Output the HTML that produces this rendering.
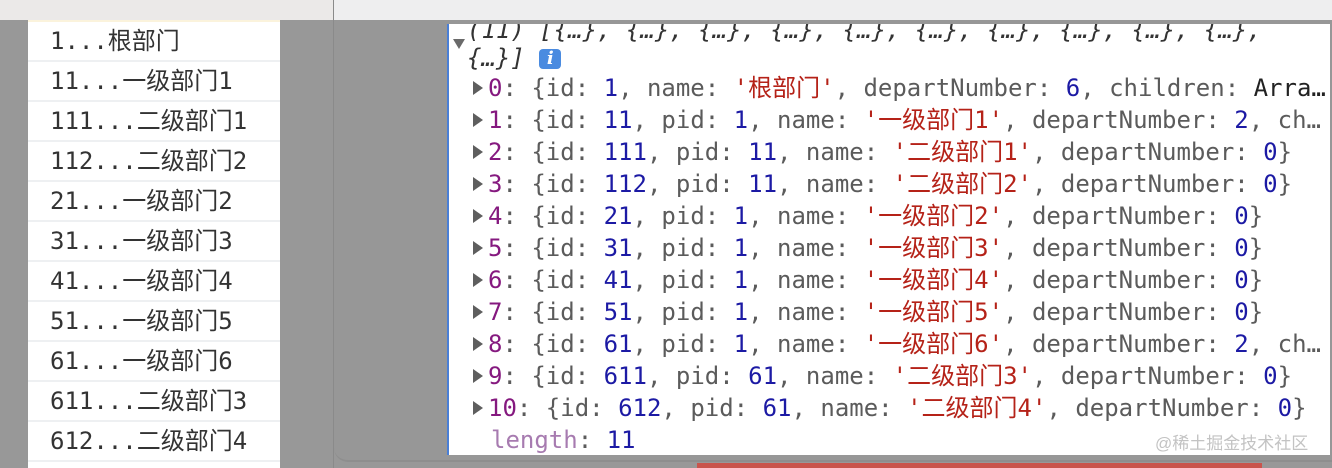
<!DOCTYPE html>
<html><head><meta charset="utf-8"><style>
*{margin:0;padding:0;box-sizing:border-box}
body{width:1332px;height:468px;overflow:hidden;background:#989898;position:relative;font-family:"DejaVu Sans Mono","Noto Sans CJK SC",monospace}
.top1{position:absolute;left:0;top:0;width:333px;height:20px;background:#ebe9e8}
.top2{position:absolute;left:334px;top:0;width:998px;height:20px;background:#eeeeef}
.vl{position:absolute;left:333px;top:0;width:1px;height:468px;background:#8a8a8a}
.inner{position:absolute;left:334px;top:20px;width:998px;height:442px;background:#979797;border-bottom-left-radius:14px;border-bottom:2px solid #8e8e8e}
.list{position:absolute;left:28px;top:20px;width:252px;height:448px;background:#fff;border-top:2px solid #fbf3dc}
.row{height:40px;border-bottom:2px solid #eef0f2;font-size:24px;color:#333;padding-left:22px;line-height:38px;white-space:nowrap}
.con{position:absolute;left:447px;top:24px;width:883px;height:431px;background:#fff;border-left:2px solid #4a7fd6;overflow:hidden;font-size:24px;color:#5b5b5b;white-space:pre}
.l{position:absolute;left:0;height:32px;line-height:32px}
.n{color:#1c1aa4}.s{color:#b52218}.i{color:#85197f}.k{color:#5b5b5b}.b{color:#222}
.tri{display:inline-block;width:0;height:0;border-top:7px solid transparent;border-bottom:7px solid transparent;border-left:10px solid #5e5e5e;margin:0 5px 0 24px;vertical-align:1px}
.info{display:inline-block;width:22px;height:20px;background:#4a8be0;border-radius:4px;color:#fff;font-style:italic;font-weight:bold;font-size:18px;line-height:20px;text-align:center;vertical-align:2px;font-family:"DejaVu Serif",serif}
.wm{position:absolute;left:1155px;top:429px;font-size:17px;color:#c3c3c3;font-family:"Liberation Sans","Noto Sans CJK SC",sans-serif}
.red{position:absolute;left:697px;top:463px;width:565px;height:5px;background:#c9544c}
</style></head><body>
<div class="top1"></div><div class="top2"></div><div class="inner"></div><div class="vl"></div>
<div class="list">
<div class="row">1...根部门</div>
<div class="row">11...一级部门1</div>
<div class="row">111...二级部门1</div>
<div class="row">112...二级部门2</div>
<div class="row">21...一级部门2</div>
<div class="row">31...一级部门3</div>
<div class="row">41...一级部门4</div>
<div class="row">51...一级部门5</div>
<div class="row">61...一级部门6</div>
<div class="row">611...二级部门3</div>
<div class="row">612...二级部门4</div>
</div>
<div class="con">
<div class="l b" style="top:-10px;left:18px;font-style:italic;color:#333">(11) [{…}, {…}, {…}, {…}, {…}, {…}, {…}, {…}, {…}, {…},</div>
<div style="position:absolute;left:4px;top:15px;width:0;height:0;border-left:6px solid transparent;border-right:6px solid transparent;border-top:10px solid #6a6a6a"></div>
<div class="l b" style="top:18px;left:18px;font-style:italic;color:#333">{…}] <span class="info">i</span></div>
<div class="l" style="top:48px"><span class="tri"></span><span class="i">0</span>: {id: <span class="n">1</span>, name: <span class="s">'根部门'</span>, departNumber: <span class="n">6</span>, children: <span class="b">Arra…</span></div>
<div class="l" style="top:80px"><span class="tri"></span><span class="i">1</span>: {id: <span class="n">11</span>, pid: <span class="n">1</span>, name: <span class="s">'一级部门1'</span>, departNumber: <span class="n">2</span>, ch…</div>
<div class="l" style="top:112px"><span class="tri"></span><span class="i">2</span>: {id: <span class="n">111</span>, pid: <span class="n">11</span>, name: <span class="s">'二级部门1'</span>, departNumber: <span class="n">0</span>}</div>
<div class="l" style="top:144px"><span class="tri"></span><span class="i">3</span>: {id: <span class="n">112</span>, pid: <span class="n">11</span>, name: <span class="s">'二级部门2'</span>, departNumber: <span class="n">0</span>}</div>
<div class="l" style="top:176px"><span class="tri"></span><span class="i">4</span>: {id: <span class="n">21</span>, pid: <span class="n">1</span>, name: <span class="s">'一级部门2'</span>, departNumber: <span class="n">0</span>}</div>
<div class="l" style="top:208px"><span class="tri"></span><span class="i">5</span>: {id: <span class="n">31</span>, pid: <span class="n">1</span>, name: <span class="s">'一级部门3'</span>, departNumber: <span class="n">0</span>}</div>
<div class="l" style="top:240px"><span class="tri"></span><span class="i">6</span>: {id: <span class="n">41</span>, pid: <span class="n">1</span>, name: <span class="s">'一级部门4'</span>, departNumber: <span class="n">0</span>}</div>
<div class="l" style="top:272px"><span class="tri"></span><span class="i">7</span>: {id: <span class="n">51</span>, pid: <span class="n">1</span>, name: <span class="s">'一级部门5'</span>, departNumber: <span class="n">0</span>}</div>
<div class="l" style="top:304px"><span class="tri"></span><span class="i">8</span>: {id: <span class="n">61</span>, pid: <span class="n">1</span>, name: <span class="s">'一级部门6'</span>, departNumber: <span class="n">2</span>, ch…</div>
<div class="l" style="top:336px"><span class="tri"></span><span class="i">9</span>: {id: <span class="n">611</span>, pid: <span class="n">61</span>, name: <span class="s">'二级部门3'</span>, departNumber: <span class="n">0</span>}</div>
<div class="l" style="top:368px"><span class="tri"></span><span class="i">10</span>: {id: <span class="n">612</span>, pid: <span class="n">61</span>, name: <span class="s">'二级部门4'</span>, departNumber: <span class="n">0</span>}</div>
<div class="l" style="top:400px;left:42px"><span style="color:#a77bb0">length</span>: <span class="n">11</span></div>
</div>
<div class="wm">@稀土掘金技术社区</div>
<div class="red"></div>
</body></html>
